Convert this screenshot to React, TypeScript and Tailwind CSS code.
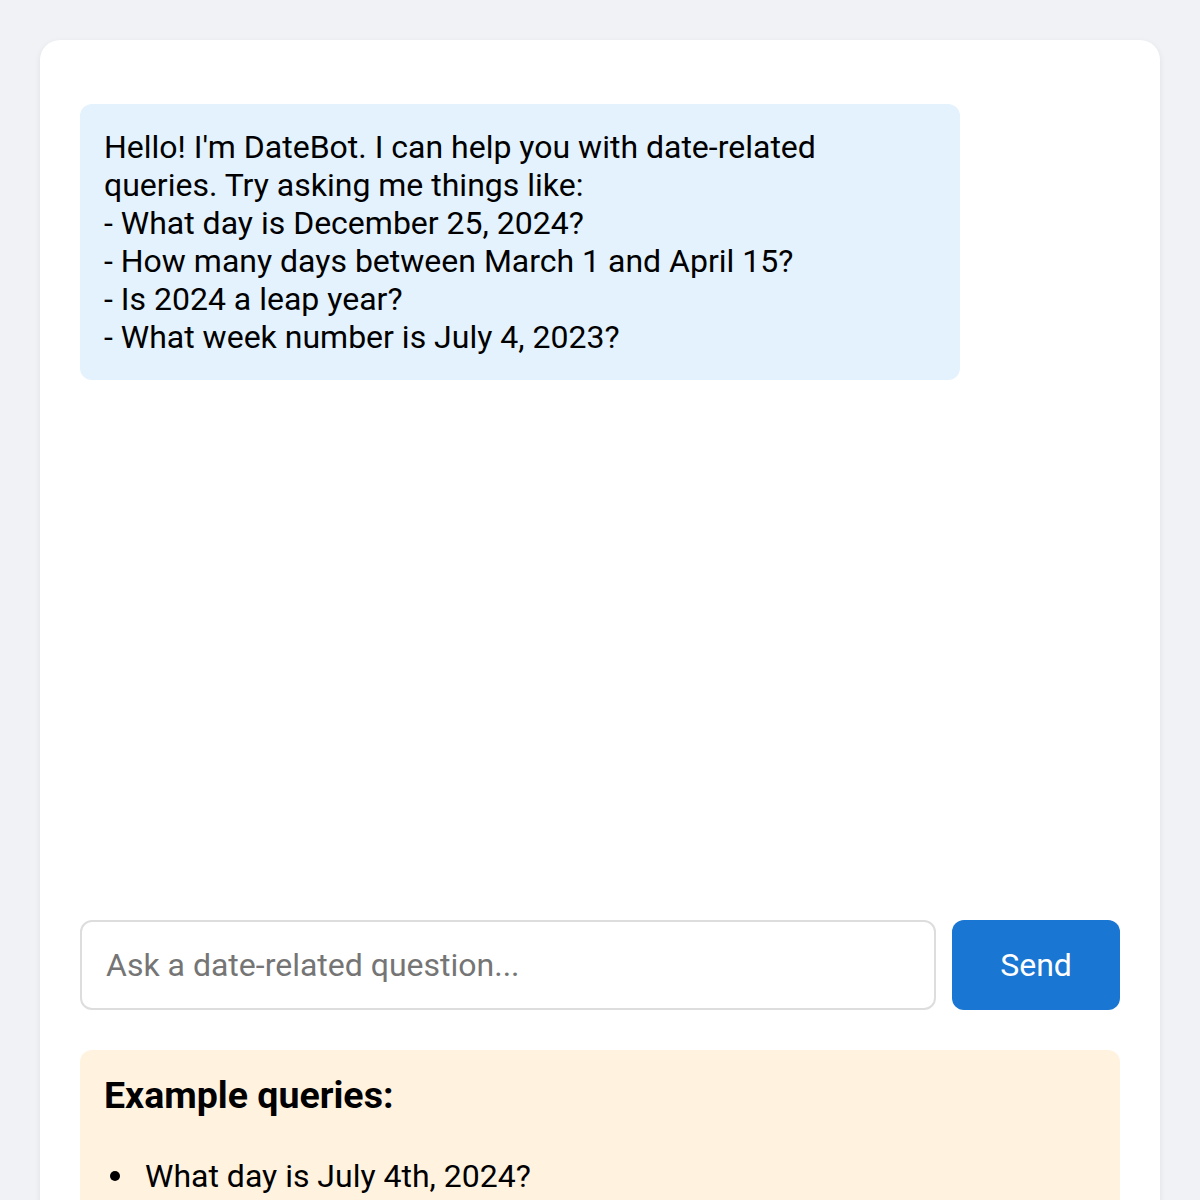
import React from "react";

const examples = ["What day is July 4th, 2024?"];

function App() {
  return (
    <div className="min-h-screen bg-[#f0f2f5] p-10 font-['Roboto',sans-serif] text-black">
      <div className="rounded-[20px] bg-white p-10 shadow-[0_2px_6px_rgba(0,0,0,0.08)]">
        <div className="h-[800px] py-6">
          <div className="w-[880px] rounded-xl bg-[#e3f2fd] p-6 text-[32px] leading-[38px]">
            Hello! I'm DateBot. I can help you with date-related queries. Try asking me things like:
            <br />- What day is December 25, 2024?
            <br />- How many days between March 1 and April 15?
            <br />- Is 2024 a leap year?
            <br />- What week number is July 4, 2023?
          </div>
        </div>
        <div className="mt-10 flex gap-4">
          <input
            className="h-[90px] flex-1 rounded-xl border-2 border-[#ddd] px-6 text-[32px] outline-none placeholder:text-[#757575]"
            placeholder="Ask a date-related question..."
          />
          <button className="h-[90px] w-[168px] rounded-xl bg-[#1976d2] text-[32px] text-white">
            Send
          </button>
        </div>
        <div className="mt-10 rounded-xl bg-[#fff3e0] p-6">
          <h3 className="text-[37.5px] font-bold leading-[42px]">Example queries:</h3>
          <ul className="mt-[38px] text-[32px] leading-[44px]">
            {examples.map((q) => (
              <li key={q} className="flex items-center">
                <span className="mr-[19px] flex w-[22px] justify-center">
                  <span className="h-[10px] w-[10px] rounded-full bg-black" />
                </span>
                {q}
              </li>
            ))}
          </ul>
        </div>
      </div>
    </div>
  );
}

export default App;
